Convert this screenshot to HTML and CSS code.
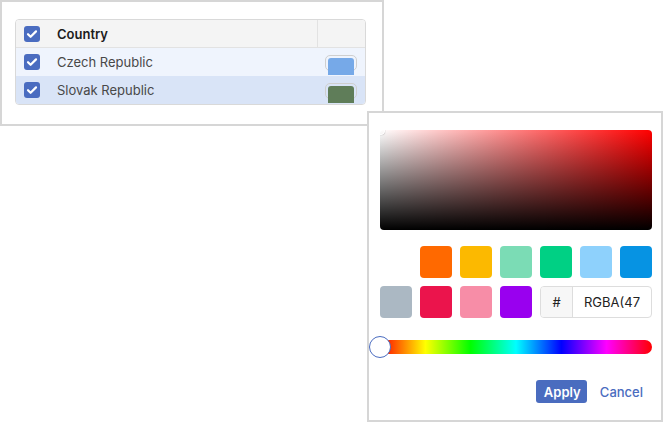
FILE: index.html
```html
<!DOCTYPE html>
<html lang="en">
<head>
  <meta charset="UTF-8">
  <title>Country colors</title>
  <link rel="stylesheet" href="styles.css">
</head>
<body>

  <div class="panel">
    <div class="grid">
      <div class="row row-head">
        <div class="cell-check">
          <svg class="check" viewBox="0 0 16 16"><rect width="16" height="16" rx="3"/><path d="M4 8.2l2.6 2.6L12 5.4"/></svg>
        </div>
        <div class="cell-name">Country</div>
        <div class="cell-color"></div>
      </div>
      <div class="row row-one">
        <div class="cell-check">
          <svg class="check" viewBox="0 0 16 16"><rect width="16" height="16" rx="3"/><path d="M4 8.2l2.6 2.6L12 5.4"/></svg>
        </div>
        <div class="cell-name">Czech Republic</div>
        <div class="cell-color">
          <div class="swatch-btn"><div class="swatch-fill" style="background:#76a9e8"></div></div>
        </div>
      </div>
      <div class="row row-two">
        <div class="cell-check">
          <svg class="check" viewBox="0 0 16 16"><rect width="16" height="16" rx="3"/><path d="M4 8.2l2.6 2.6L12 5.4"/></svg>
        </div>
        <div class="cell-name">Slovak Republic</div>
        <div class="cell-color">
          <div class="swatch-btn"><div class="swatch-fill" style="background:#5f7d59"></div></div>
        </div>
      </div>
    </div>
  </div>

  <!-- Color picker popup -->
  <div class="picker">
    <div class="saturation">
      <span class="sat-pointer"></span>
    </div>

    <div class="swatches">
      <span class="swatch" style="background:#ff6900"></span>
      <span class="swatch" style="background:#fcb900"></span>
      <span class="swatch" style="background:#7bdcb5"></span>
      <span class="swatch" style="background:#00d084"></span>
      <span class="swatch" style="background:#8ed1fc"></span>
      <span class="swatch" style="background:#0693e3"></span>
    </div>
    <div class="swatches swatches-left">
      <span class="swatch" style="background:#abb8c3"></span>
      <span class="swatch" style="background:#eb144c"></span>
      <span class="swatch" style="background:#f78da7"></span>
      <span class="swatch" style="background:#9900ef"></span>
      <div class="hex-input">
        <span class="hex-addon">#</span>
        <span class="hex-value">RGBA(47</span>
      </div>
    </div>

    <div class="hue">
      <span class="hue-thumb"></span>
    </div>

    <div class="actions">
      <button class="btn-apply">Apply</button>
      <button class="btn-cancel">Cancel</button>
    </div>
  </div>

</body>
</html>
```

FILE: styles.css
```css
body {
  font-family: Inter, "Noto Sans", sans-serif;
  font-size: 13px;
  color: #484848;
  margin: 0;
  padding: 0;
  background-color: #fff;
}

.panel {
  border: 2px solid #d6d6d6;
  padding: 17px 0 0 13px;
  box-sizing: border-box;
  width: 384px;
  height: 126px;
}

.grid {
  width: 351px;
  border: 1px solid #d9d9d9;
  border-radius: 4px;
  overflow: hidden;
  box-sizing: border-box;
}

.row {
  display: flex;
  align-items: center;
  height: 28px;
}

.row-head {
  height: 27px;
  background-color: #f4f4f4;
  border-bottom: 1px solid #e2e2e2;
  color: #1c1c1c;
  font-weight: 600;
}

.row-one {
  background-color: #eff4fd;
}

.row-two {
  background-color: #d9e4f7;
}

.cell-check {
  width: 41px;
  padding-left: 8px;
  box-sizing: border-box;
  display: flex;
  align-items: center;
}

.check {
  width: 16px;
  height: 16px;
  display: block;
}

.check rect {
  fill: #4a6cc0;
}

.check path {
  fill: none;
  stroke: #fff;
  stroke-width: 2.2;
  stroke-linecap: round;
  stroke-linejoin: round;
}

.cell-name {
  flex: 1;
}

.cell-color {
  width: 48px;
  height: 100%;
  padding: 0 0 0 8px;
  box-sizing: border-box;
  display: flex;
  align-items: center;
}

.row-head .cell-color {
  border-left: 1px solid #e2e2e2;
}

.swatch-btn {
  width: 32px;
  height: 16px;
  border: 1px solid #cfcfcf;
  border-radius: 5px;
  padding: 2px 2px 0;
  box-sizing: border-box;
  margin-top: 2px;
}

.swatch-fill {
  height: 17px;
  border-radius: 3px 3px 0 0;
}

/* Color picker */
.picker {
  position: absolute;
  left: 367px;
  top: 111px;
  width: 296px;
  height: 311px;
  box-sizing: border-box;
  border: 2px solid #d6d6d6;
  background-color: #fff;
  padding: 17px 9px 0 11px;
}

.saturation {
  position: relative;
  height: 100px;
  border-radius: 4px;
  overflow: hidden;
  background: linear-gradient(to top, #000, rgba(0, 0, 0, 0)),
              linear-gradient(to right, #fff, #f00);
}

.sat-pointer {
  position: absolute;
  left: -3px;
  top: -3px;
  width: 6px;
  height: 6px;
  border-radius: 50%;
  border: 1px solid #fff;
  box-shadow: 0 0 1px rgba(0, 0, 0, 0.5);
}

.swatches {
  display: flex;
  justify-content: flex-end;
  gap: 8px;
  margin-top: 16px;
}

.swatches-left {
  justify-content: flex-start;
  margin-top: 8px;
}

.swatch {
  width: 32px;
  height: 32px;
  border-radius: 4px;
}

.hex-input {
  display: flex;
  width: 112px;
  height: 32px;
  border: 1px solid #ddd;
  border-radius: 4px;
  box-sizing: border-box;
  overflow: hidden;
  color: #222;
  font-size: 13px;
}

.hex-addon {
  width: 31px;
  background-color: #f7f7f7;
  border-right: 1px solid #ddd;
  display: flex;
  align-items: center;
  justify-content: center;
}

.hex-value {
  flex: 1;
  display: flex;
  align-items: center;
  padding-left: 11px;
  white-space: nowrap;
}

.hue {
  position: relative;
  height: 14px;
  margin-top: 22px;
  border-radius: 7px;
  background: linear-gradient(to right, #f00 0%, #ff0 16.7%, #0f0 33.3%, #0ff 50%, #00f 66.7%, #f0f 83.3%, #f00 100%);
}

.hue-thumb {
  position: absolute;
  left: -11px;
  top: -4px;
  width: 20px;
  height: 20px;
  border-radius: 50%;
  border: 1px solid #4a6cc0;
  background-color: #fff;
}

.actions {
  display: flex;
  justify-content: flex-end;
  align-items: center;
  gap: 13px;
  margin-top: 26px;
  padding-right: 9px;
}

button {
  font-family: Inter, "Noto Sans", sans-serif;
  font-size: 13px;
  border: none;
  cursor: pointer;
}

.btn-apply {
  background-color: #4a6cbf;
  color: #fff;
  font-weight: 600;
  height: 23px;
  padding: 0 8px;
  border-radius: 3px;
  width: 51px;
}

.btn-cancel {
  background: none;
  color: #4a6cc0;
  font-weight: 500;
  padding: 0;
}
```
